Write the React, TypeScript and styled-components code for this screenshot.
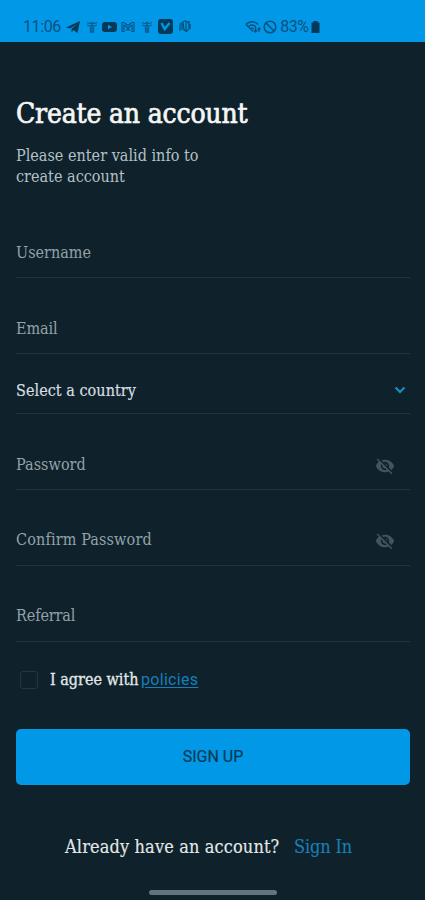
import React from "react";
import styled, { createGlobalStyle } from "styled-components";

const GlobalStyle = createGlobalStyle`
  * { box-sizing: border-box; }
  body { margin: 0; background: #0f222b; }
`;

const Screen = styled.div`
  width: 425px;
  height: 900px;
  display: flex;
  flex-direction: column;
  background: #0f222b;
  font-family: "DejaVu Serif Condensed", "DejaVu Serif", serif;
  font-stretch: condensed;
  overflow: hidden;
`;

const StatusBar = styled.header`
  height: 42px;
  flex: none;
  display: flex;
  align-items: center;
  padding: 11px 0 0 23px;
  background: #0298e8;
  color: #07527f;
  font: 16px/20px Roboto, sans-serif;
`;

const StatusText = styled.span<{ $width: number; $spacing?: number }>`
  width: ${(p) => p.$width}px;
  letter-spacing: ${(p) => p.$spacing ?? 0}px;
  white-space: nowrap;
`;

const StatusIcon = styled.svg<{ $gap?: number; $weight?: number }>`
  flex: none;
  margin-left: ${(p) => p.$gap ?? 0}px;
  fill: none;
  stroke: currentColor;
  stroke-width: ${(p) => p.$weight ?? 1.3};
`;

const Content = styled.main`
  flex: 1;
  display: flex;
  flex-direction: column;
  padding: 0 15px 0 16px;
`;

const Title = styled.h1`
  margin: 54px 0 0;
  font-size: 28px;
  line-height: 36px;
  font-weight: 400;
  letter-spacing: -0.18px;
  color: #f5f6f4;
  -webkit-text-stroke: 0.7px currentColor;
`;

const Subtitle = styled.p`
  margin: 13px 0 0;
  height: 83px;
  font-size: 16px;
  line-height: 21px;
  letter-spacing: 0.02px;
  color: #b4c0c6;
`;

const Field = styled.div<{ $height: number; $bottom?: number; $bright?: boolean }>`
  flex: none;
  height: ${(p) => p.$height}px;
  display: flex;
  align-items: flex-end;
  justify-content: space-between;
  padding-bottom: ${(p) => p.$bottom ?? 14}px;
  border-bottom: 1px solid #21343d;
  font-size: 16px;
  line-height: 22px;
  color: ${(p) => (p.$bright ? "#d5dde0" : "#93a1a8")};
  -webkit-text-stroke: ${(p) => (p.$bright ? 0.2 : 0)}px currentColor;
`;

const Label = styled.span<{ $spacing?: number }>`
  letter-spacing: ${(p) => p.$spacing ?? 0}px;
`;

const EyeIcon = styled.svg`
  width: 20px;
  height: 20px;
  margin: 0 15px 0 0;
  fill: #43545d;
`;

const Chevron = styled.svg`
  width: 12px;
  height: 8px;
  margin: 0 4px 8px 0;
  fill: none;
  stroke: #138fc9;
  stroke-width: 2;
`;

const Agreement = styled.div`
  display: flex;
  align-items: center;
  height: 24px;
  margin-top: 26px;
  padding-left: 4px;
  font-size: 16px;
  color: #e3e8e9;
`;

const Checkbox = styled.span`
  width: 18px;
  height: 18px;
  border: 1.5px solid #26353e;
  border-radius: 3px;
`;

const AgreementText = styled.span`
  width: 91px;
  margin: -2px 0 0 12px;
  white-space: nowrap;
  -webkit-text-stroke: 0.3px currentColor;
`;

const PolicyLink = styled.a`
  font: 16px/20px Roboto, sans-serif;
  letter-spacing: 0.3px;
  color: #147fb9;
  text-decoration: underline;
  text-underline-offset: 2px;
`;

const SubmitButton = styled.button`
  flex: none;
  height: 56px;
  margin: 37px 0 0;
  padding: 0;
  border: 0;
  border-radius: 5px;
  background: #0298e8;
  color: #083a52;
  font: 16px/20px Roboto, sans-serif;
  -webkit-text-stroke: 0.2px currentColor;
`;

const Footer = styled.div`
  display: flex;
  margin: 49px 0 0 49px;
  font-size: 18px;
  line-height: 26px;
  white-space: nowrap;
  color: #e3e8e9;
  -webkit-text-stroke: 0.15px currentColor;
`;

const Question = styled.span`
  width: 229px;
  letter-spacing: 0.13px;
`;

const SignIn = styled.a`
  letter-spacing: -0.15px;
  color: #187eb4;
`;

const HomeIndicator = styled.div`
  width: 128px;
  height: 5px;
  margin: 30px 0 0 133px;
  border-radius: 3px;
  background: #64747c;
`;

const ShirtIcon = ({ gap }: { gap: number }) => (
  <StatusIcon $gap={gap} width="12" height="14" viewBox="0 0 12 14">
    <path d="M1 2.5l3 1 2-1 2 1 3-1M1 5l3 1 2-1 2 1 3-1M4.5 7v5h3V7M6 3v9" opacity=".8" />
  </StatusIcon>
);

const HiddenIcon = () => (
  <EyeIcon viewBox="0 0 24 24">
    <path d="M12 7c2.76 0 5 2.24 5 5 0 .65-.13 1.26-.36 1.83l2.92 2.92c1.51-1.26 2.7-2.89 3.43-4.75-1.73-4.39-6-7.5-11-7.5-1.4 0-2.74.25-3.98.7l2.16 2.16C10.74 7.13 11.35 7 12 7zM2 4.27l2.28 2.28.46.46C3.08 8.3 1.78 10.02 1 12c1.73 4.39 6 7.5 11 7.5 1.55 0 3.03-.3 4.38-.84l.42.42L19.73 22 21 20.73 3.27 3 2 4.27zM7.53 9.8l1.55 1.55c-.05.21-.08.43-.08.65 0 1.66 1.34 3 3 3 .22 0 .44-.03.65-.08l1.55 1.55c-.67.33-1.41.53-2.2.53-2.76 0-5-2.24-5-5 0-.79.2-1.53.53-2.2zm4.31-.78l3.15 3.15.02-.16c0-1.66-1.34-3-3-3l-.17.01z" />
  </EyeIcon>
);

export default function App() {
  return (
    <>
      <GlobalStyle />
      <Screen>
        <StatusBar>
          <StatusText $width={43} $spacing={-0.4}>11:06</StatusText>
          <StatusIcon width="14" height="14" viewBox="0 0 14 14">
            <path d="M0 7.5L14 1l-2.5 12-4-3-2 2.5V8.8L11 4 4 8.5z" fill="#043957" stroke="none" />
          </StatusIcon>
          <ShirtIcon gap={6} />
          <StatusIcon $gap={4} width="15" height="12" viewBox="0 0 15 12">
            <rect y="1" width="15" height="10" rx="3" fill="#043957" stroke="none" />
            <path d="M6 3.7v4.6L10 6z" fill="#0298e8" stroke="none" />
          </StatusIcon>
          <StatusIcon $gap={4} $weight={1.1} width="14" height="12" viewBox="0 0 14 12">
            <path d="M1 1.5h2l4 3 4-3h2v9h-2V4L7 7 3 4v6.5H1zM5 9.5l2-2 2 2" />
          </StatusIcon>
          <ShirtIcon gap={6} />
          <StatusIcon $gap={5} $weight={2.4} width="15" height="15" viewBox="0 0 15 15">
            <rect width="15" height="15" rx="3" fill="#043957" stroke="none" />
            <path d="M3.5 4l3.2 6 4.8-6" stroke="#0298e8" />
          </StatusIcon>
          <StatusIcon $gap={5} width="13" height="13" viewBox="0 0 13 13">
            <path d="M2 11V4l3-2 1 8 2 1V3l3-1v7l-3 3M4 10V4M10 2L7 1 5 2M12 4v5" />
          </StatusIcon>
          <StatusIcon $gap={54} width="16" height="14" viewBox="0 0 16 14">
            <path d="M.8 4.5C4.5.8 9.5.8 13.2 4.5M3 6.7q4-3.5 8 0M5.2 8.8q1.8-1.5 3.6 0M1 4.5l7 7M10.5 7v5M8.8 10.3l1.7 1.7 1.7-1.7M14 12V8m-1.5 1.5L14 8l1.5 1.5" />
          </StatusIcon>
          <StatusIcon $gap={2} $weight={1.6} width="14" height="14" viewBox="0 0 14 14">
            <circle cx="7" cy="7" r="5.8" />
            <path d="M3 3l8 8" />
          </StatusIcon>
          <StatusText $width={34} $spacing={-0.6}>
            &nbsp;83%
          </StatusText>
          <StatusIcon width="9" height="12" viewBox="0 0 9 12">
            <path d="M2.5 0h4v1.5h2V12h-8V1.5h2z" fill="#043957" stroke="none" />
          </StatusIcon>
        </StatusBar>
        <Content>
          <Title>Create an account</Title>
          <Subtitle>
            Please enter valid info to
            <br />
            create account
          </Subtitle>
          <Field $height={50} $bottom={13}>
            <Label>Username</Label>
          </Field>
          <Field $height={76} $bottom={13}>
            <Label $spacing={-0.1}>Email</Label>
          </Field>
          <Field $height={60} $bottom={11} $bright>
            <Label $spacing={0.05}>Select a country</Label>
            <Chevron viewBox="0 0 12 8">
              <path d="M1.5 1.5L6 6l4.5-4.5" />
            </Chevron>
          </Field>
          <Field $height={76} $bottom={13}>
            <Label $spacing={0.05}>Password</Label>
            <HiddenIcon />
          </Field>
          <Field $height={76}>
            <Label $spacing={0.15}>Confirm Password</Label>
            <HiddenIcon />
          </Field>
          <Field $height={76}>
            <Label $spacing={-0.1}>Referral</Label>
          </Field>
          <Agreement>
            <Checkbox />
            <AgreementText>I agree with</AgreementText>
            <PolicyLink>policies</PolicyLink>
          </Agreement>
          <SubmitButton>SIGN UP</SubmitButton>
          <Footer>
            <Question>Already have an account?</Question>
            <SignIn>Sign In</SignIn>
          </Footer>
          <HomeIndicator />
        </Content>
      </Screen>
    </>
  );
}
